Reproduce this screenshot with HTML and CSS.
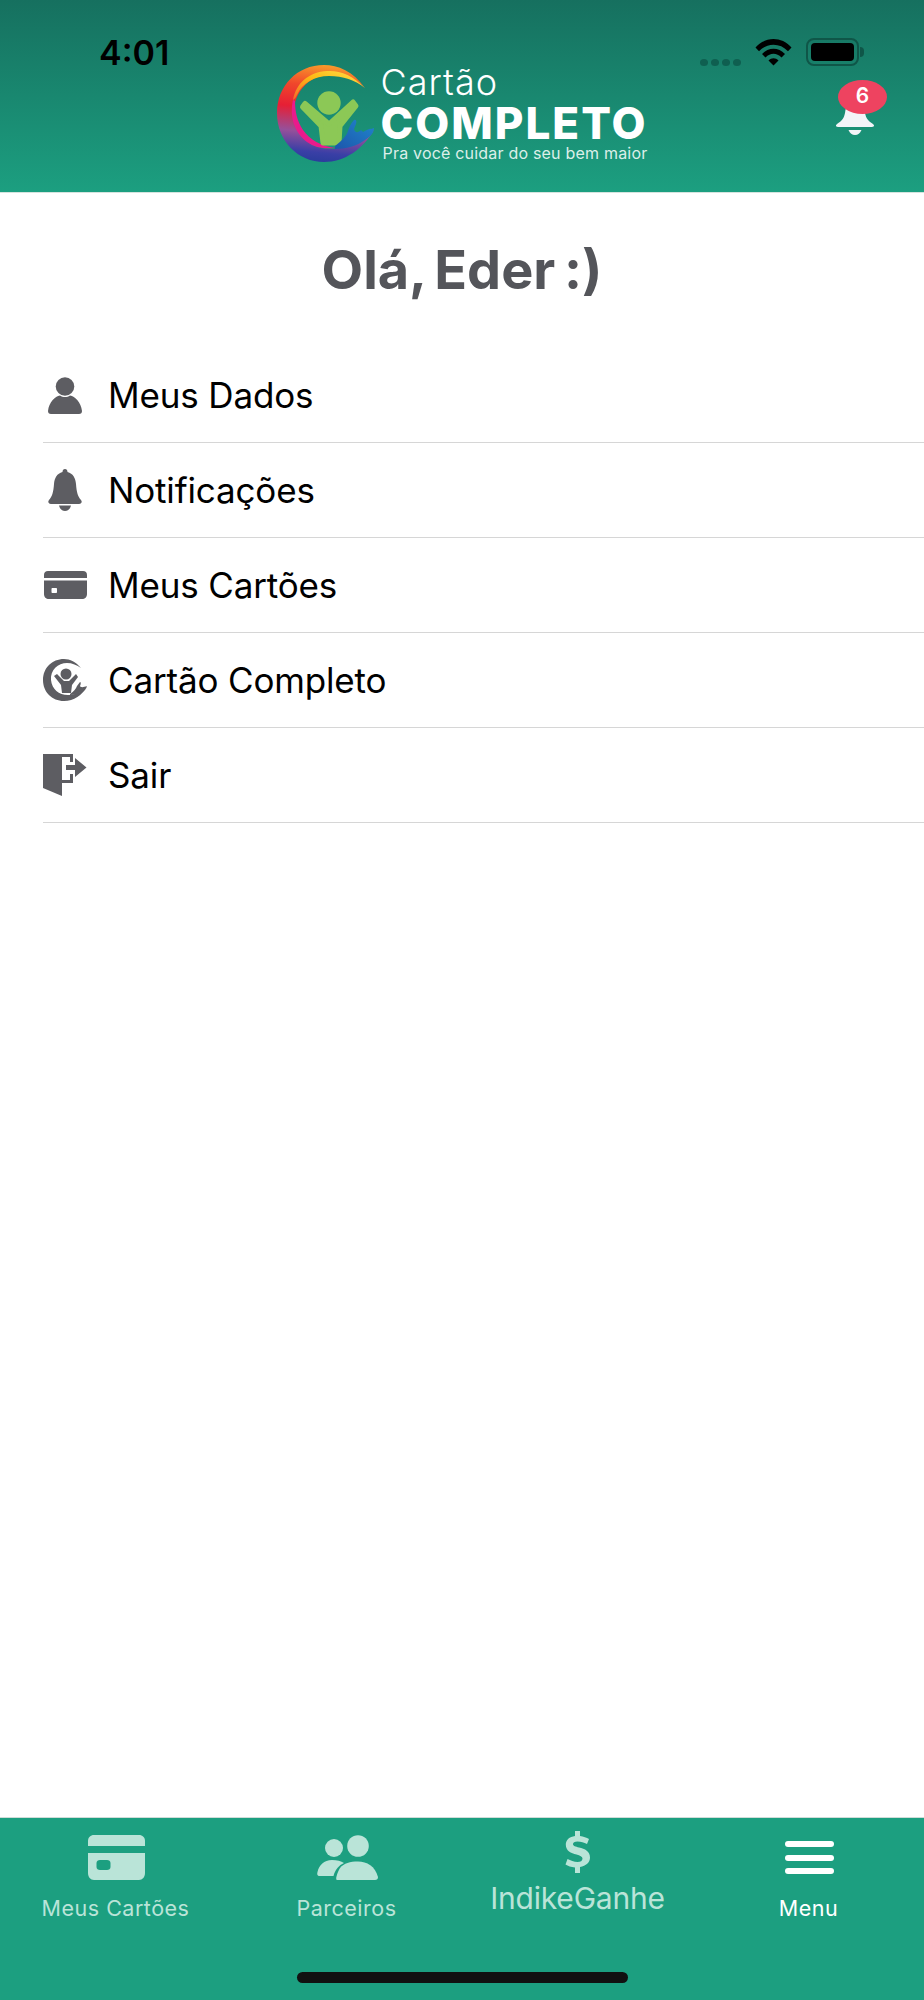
FILE: index.html
```html
<!DOCTYPE html>
<html lang="pt-BR">
<head>
    <meta charset="UTF-8">
    <meta name="viewport" content="width=device-width, initial-scale=1.0">
    <title>Cartão Completo - Menu</title>
    <link rel="stylesheet" href="styles.css">
</head>
<body>
    <div class="app">
        <header class="header">
            <!-- Status bar -->
            <div class="status-bar">
                <span class="status-time">4:01</span>
                <div class="status-icons">
                    <div class="signal"><i></i><i></i><i></i><i></i></div>
                    <svg class="wifi" width="37" height="28" viewBox="0 0 37 28">
                        <path d="M0.5 9.5C10.5 -1.8 26.5 -1.8 36.5 9.5L33 13.2C25 4.6 12 4.6 4 13.2Z"/>
                        <path d="M7 16C13.5 9 23.5 9 30 16L26.5 19.5C21.5 14.6 15.5 14.6 10.5 19.5Z"/>
                        <path d="M13.5 22.5C16.5 19.6 20.5 19.6 23.5 22.5L18.5 27.5Z"/>
                    </svg>
                    <div class="battery"><div class="battery-level"></div></div>
                </div>
            </div>

            <!-- Logo -->
            <div class="logo">
                <svg class="logo-mark" width="100" height="98" viewBox="0 0 100 98">
                    <defs>
                        <linearGradient id="swirl" x1="0.5" y1="0" x2="0.4" y2="1">
                            <stop offset="0" stop-color="#f99a2a"/>
                            <stop offset="0.22" stop-color="#f0472b"/>
                            <stop offset="0.45" stop-color="#e61f35"/>
                            <stop offset="0.7" stop-color="#96509a"/>
                            <stop offset="0.9" stop-color="#3a3fa6"/>
                            <stop offset="1" stop-color="#2a3c9c"/>
                        </linearGradient>
                        <linearGradient id="sun" x1="0" y1="1" x2="1" y2="0">
                            <stop offset="0" stop-color="#f2682c"/>
                            <stop offset="0.5" stop-color="#fdb813"/>
                            <stop offset="1" stop-color="#ffe14d"/>
                        </linearGradient>
                        <linearGradient id="hand" x1="0" y1="1" x2="1" y2="0">
                            <stop offset="0" stop-color="#1d56ac"/>
                            <stop offset="1" stop-color="#1f86cc"/>
                        </linearGradient>
                    </defs>
                    <path fill="url(#swirl)" d="M88 23C76 6 61 0 47 0C20 0 0 21 0 48C0 76 21 97 47 97C68 97 86 84 97 65C85 76 70 84 52 84C32 84 17 68 17 47C17 25 35 9 55 9C68 9 79 14 88 23Z"/>
                    <path fill="url(#sun)" d="M88 23C76 10 62 5 50 6C32 7 19 18 16 35C18 34 19 32 20 30C25 18 38 11 52 11C66 11 78 15 88 23Z"/>
                    <path fill="#ea1a8c" d="M16 35C12 52 18 68 30 77C38 83 48 84 58 83C44 81 33 75 26 65C20 56 18 46 18 36Z"/>
                    <circle cx="52" cy="38" r="11.7" fill="#8cc856"/>
                    <path fill="#8cc856" stroke="#8cc856" stroke-width="5" stroke-linejoin="round" d="M52 59L28 38.5L25.5 42L44 61L46 78L62 78L63 61L79 41L76 37Z"/>
                    <path fill="url(#hand)" d="M58 81C64 76 69 72 71 66C72 62 75 57 77 55C79 54 80 56 79 59L77 64C78 68 81 68 84 65L86 67C89 66 92 63 94 64L97 63C97 68 93 72 88 75C80 81 69 84 58 84Z"/>
                </svg>
                <div class="logo-text">
                    <span class="logo-line">Cartão</span>
                    <span class="logo-name">COMPLETO</span>
                    <span class="logo-tag">Pra você cuidar do seu bem maior</span>
                </div>
            </div>

            <!-- Notification bell -->
            <div class="header-bell">
                <svg width="40" height="36" viewBox="0 0 40 36">
                    <path d="M20 0C27 0 29 6 30 13C31 18 33 21 38 24C40 26 39 27 36 27H4C1 27 0 26 2 24C7 21 9 18 10 13C11 6 13 0 20 0Z"/>
                    <path d="M13.5 30H26.5C25 33.5 23 35 20 35C17 35 15 33.5 13.5 30Z"/>
                </svg>
                <span class="badge">6</span>
            </div>
        </header>

        <main class="content">
            <h1 class="greeting">Olá, Eder :)</h1>
            <ul class="menu-list">
                <li class="menu-item">
                    <span class="menu-icon">
                        <svg width="36" height="37" viewBox="0 0 36 37">
                            <circle cx="18" cy="9.5" r="9.3"/>
                            <path d="M1 34C2 25 8 19.5 13 18.5C16 20.5 20 20.5 23 18.5C28 19.5 34 25 35 34C35 36 34 37 32 37H4C2 37 1 36 1 34Z"/>
                        </svg>
                    </span>
                    <span>Meus Dados</span>
                </li>
                <li class="menu-item">
                    <span class="menu-icon">
                        <svg width="34" height="42" viewBox="0 0 34 42">
                            <path d="M17 0C18.5 0 19.5 1 19.5 3C25 4.5 27.5 9 28 15C28.5 23 30 28 33 31C34.5 33 33.5 35 31 35H3C0.5 35 -0.5 33 1 31C4 28 5.5 23 6 15C6.5 9 9 4.5 14.5 3C14.5 1 15.5 0 17 0Z"/>
                            <path d="M11 36.5H23C22 40 20 42 17 42C14 42 12 40 11 36.5Z"/>
                        </svg>
                    </span>
                    <span>Notificações</span>
                </li>
                <li class="menu-item">
                    <span class="menu-icon">
                        <svg width="43" height="28" viewBox="0 0 43 28">
                            <path d="M0 7V4C0 1.5 1.5 0 4 0H39C41.5 0 43 1.5 43 4V7Z"/>
                            <path d="M0 9.5H43V23C43 26 41 28 38 28H5C2 28 0 26 0 23ZM8.5 17C7.8 17 7.5 17.5 7.5 18V21C7.5 21.5 7.8 22 8.5 22H12C12.7 22 13 21.5 13 21V18C13 17.5 12.7 17 12 17Z" fill-rule="evenodd"/>
                        </svg>
                    </span>
                    <span>Meus Cartões</span>
                </li>
                <li class="menu-item">
                    <span class="menu-icon">
                        <svg width="44" height="42" viewBox="0 0 44 42">
                            <path d="M38 9C33 3 27 0 21 0C9 0 0 9 0 21C0 33 9 42 21 42C31 42 39 36 44 28C39 32 34 35 27 36C17 37 9 31 8 21C7 11 15 4 24 4C29 4 34 6 38 9Z"/>
                            <circle cx="23" cy="15" r="5.5"/>
                            <path d="M11 17L14 15L21 22H26L33 15L35 18L29 26L28 34H19L18 26Z"/>
                            <path d="M27 35C31 32 33 30 34 27L37 23C38 23 38 25 37 27C38 29 41 28 44 27C43 31 35 36 27 36Z"/>
                        </svg>
                    </span>
                    <span>Cartão Completo</span>
                </li>
                <li class="menu-item">
                    <span class="menu-icon">
                        <svg width="44" height="42" viewBox="0 0 44 42">
                            <path d="M0 0H19V42L0 34Z"/>
                            <path d="M6 0H30V8H27V3H6Z"/>
                            <path d="M19 29V26H27V20H30V29Z"/>
                            <path d="M23 11H32V4L43.5 13.5L32 23V16H23Z"/>
                        </svg>
                    </span>
                    <span>Sair</span>
                </li>
            </ul>
        </main>

        <nav class="tab-bar">
            <div class="tab">
                <svg class="tab-icon" width="57" height="45" viewBox="0 0 57 45">
                    <path d="M0 11V6C0 2.5 2.5 0 6 0H51C54.5 0 57 2.5 57 6V11Z"/>
                    <path d="M0 18H57V38C57 42 54.5 45 51 45H6C2.5 45 0 42 0 38ZM12 25C10 25 8.5 26 8.5 28V32C8.5 34 10 35 12 35H19C21 35 22.5 34 22.5 32V28C22.5 26 21 25 19 25Z" fill-rule="evenodd"/>
                </svg>
                <span class="tab-label">Meus Cartões</span>
            </div>
            <div class="tab">
                <svg class="tab-icon" width="61" height="45" viewBox="0 0 61 45">
                    <circle cx="41" cy="11" r="10.8"/>
                    <circle cx="17" cy="13" r="9"/>
                    <path d="M20 45C18 45 20 38 23 33C27 28 33 26.5 41 26.5C50 26.5 58 31 61 42C61 44 60 45 58 45Z"/>
                    <path d="M3 41C0 41 0 39 0.5 37C2 30 7 25 15 25C20 25 24 26 27 28C22 30 18 35 16.5 41Z"/>
                </svg>
                <span class="tab-label">Parceiros</span>
            </div>
            <div class="tab tab-promo">
                <svg width="25" height="42" viewBox="0 0 25 42">
                    <path d="M10 0H15V5C18.5 5.5 21.5 6.5 24 8L22 13C19 11.5 16 10.5 12.5 10.5C9.5 10.5 8 11.5 8 13C8 15 10.5 15.5 14 16.5C20 18 25 20 25 26.5C25 31.5 21 35 15 36V42H10V36.5C6 36 3 35 0.5 33.5L2.5 28C5.5 29.5 9 31 12.5 31C15.5 31 17.5 30 17.5 27.5C17.5 25.5 15 24.5 11.5 23.5C6 22 0.8 20 0.8 13.5C0.8 9 4.5 5.8 10 5Z"/>
                </svg>
                <span class="tab-label">IndikeGanhe</span>
            </div>
            <div class="tab tab-active">
                <div class="hamburger"><i></i><i></i><i></i></div>
                <span class="tab-label">Menu</span>
            </div>
            <div class="home-indicator"></div>
        </nav>
    </div>
</body>
</html>
```

FILE: styles.css
```css
* {
    box-sizing: border-box;
}
body {
    margin: 0;
    background-color: #fff;
    font-family: 'Inter', 'Liberation Sans', sans-serif;
    color: #000;
}
.app {
    display: flex;
    flex-direction: column;
    height: 2000px;
    overflow: hidden;
}

/* Header */
.header {
    position: relative;
    display: flex;
    justify-content: center;
    height: 193px;
    padding-top: 65px;
    background: linear-gradient(#16705f, #1c9f80);
    border-bottom: 1px solid #d5e3de;
}
.status-bar {
    position: absolute;
    top: 38px;
    left: 99px;
    right: 65px;
    display: flex;
    justify-content: space-between;
    align-items: flex-start;
}
.status-time {
    font-size: 34px;
    font-weight: 600;
    line-height: 30px;
    color: #000;
}
.status-icons {
    display: flex;
    align-items: center;
    gap: 14px;
}
.signal {
    display: flex;
    gap: 3px;
    margin-top: 20px;
}
.signal i {
    width: 8px;
    height: 7px;
    border-radius: 50%;
    background-color: #0f5f50;
}
.battery {
    position: relative;
    width: 53px;
    height: 28px;
    padding: 3px;
    border: 2px solid #0f5648;
    border-radius: 8px;
}
.battery::after {
    content: "";
    position: absolute;
    top: 7px;
    right: -7px;
    width: 4px;
    height: 10px;
    border-radius: 0 4px 4px 0;
    background-color: #0f5648;
}
.battery-level {
    height: 100%;
    border-radius: 4px;
    background-color: #000;
}

/* Logo */
.logo {
    display: flex;
    align-items: flex-start;
    gap: 4px;
}
.logo-text {
    display: flex;
    flex-direction: column;
    color: #fff;
}
.logo-line {
    margin-top: 2px;
    font-size: 36px;
    font-weight: 300;
    line-height: 31px;
    letter-spacing: 1px;
}
.logo-name {
    margin-top: 7px;
    font-size: 44px;
    font-weight: 800;
    line-height: 36px;
    letter-spacing: 2px;
}
.logo-tag {
    margin-top: 2px;
    margin-left: 2px;
    font-size: 16px;
    line-height: 20px;
    letter-spacing: 0.2px;
    color: #dcefe9;
}

/* Bell with badge */
.header-bell {
    position: absolute;
    top: 100px;
    left: 835px;
}
.header-bell svg {
    display: block;
    fill: #f3f4f8;
}
.badge {
    position: absolute;
    top: -20px;
    left: 3px;
    width: 49px;
    height: 34px;
    border-radius: 50%;
    background-color: #ee4360;
    color: #fff;
    font-size: 21px;
    font-weight: 600;
    line-height: 32px;
    text-align: center;
}

/* Menu */
.content {
    flex: 1;
}
.greeting {
    margin: 42px 0 43px;
    text-align: center;
    font-size: 54px;
    font-weight: 700;
    line-height: 70px;
    word-spacing: -4px;
    color: #54555a;
}
.menu-list {
    list-style: none;
    margin: 0;
    padding: 0 0 0 43px;
}
.menu-item {
    display: flex;
    align-items: center;
    height: 95px;
    border-bottom: 1px solid #d6d6d6;
    font-size: 35px;
    letter-spacing: -0.15px;
}
.menu-icon {
    display: flex;
    justify-content: center;
    align-items: center;
    width: 44px;
    margin-right: 21px;
}
.menu-icon svg {
    display: block;
    fill: #5d5d62;
}

/* Bottom tabs */
.tab-bar {
    position: relative;
    display: grid;
    grid-template-columns: repeat(4, 1fr);
    height: 183px;
    padding-top: 17px;
    background-color: #1c9f80;
    border-top: 1px solid #cfdcd8;
}
.tab {
    display: flex;
    flex-direction: column;
    align-items: center;
    color: #bae4d8;
}
.tab svg {
    display: block;
    fill: #bae4d8;
}
.tab-icon {
    margin-left: 2px;
}
.tab-label {
    margin-top: 14px;
    font-size: 21.5px;
    line-height: 28px;
    letter-spacing: 0.5px;
}
.tab-promo {
    margin-top: -4px;
}
.tab-promo .tab-label {
    margin-top: 7px;
    font-size: 30px;
    line-height: 36px;
    letter-spacing: -0.2px;
}
.tab-active {
    color: #fff;
}
.hamburger {
    display: flex;
    flex-direction: column;
    justify-content: space-between;
    width: 49px;
    height: 33px;
    margin: 6px 0 6px 2px;
}
.hamburger i {
    height: 6px;
    border-radius: 3px;
    background-color: #fff;
}
.home-indicator {
    position: absolute;
    bottom: 17px;
    left: 297px;
    width: 331px;
    height: 11px;
    border-radius: 6px;
    background-color: #111;
}
```
